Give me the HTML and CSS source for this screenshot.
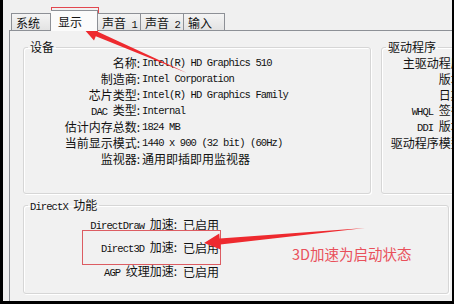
FILE: index.html
```html
<!DOCTYPE html>
<html lang="zh-CN">
<head>
  <meta charset="UTF-8">
  <title>DirectX 诊断工具 - 显示</title>
  <link rel="stylesheet" href="styles.css">
</head>
<body>
  <div class="screen">
    <div class="dialog">
      <div class="tabs">
        <div class="tab t1">系统</div>
        <div class="tab t2 active">显示</div>
        <div class="tab t3">声音<span class="en"> 1</span></div>
        <div class="tab t3">声音<span class="en"> 2</span></div>
        <div class="tab t4">输入</div>
      </div>
      <div class="panel">
        <div class="top-row">
          <fieldset class="group device">
            <legend>设备</legend>
            <div class="rows">
              <span class="lbl">名称:</span><span class="val en">Intel(R) HD Graphics 510</span>
              <span class="lbl">制造商:</span><span class="val en">Intel Corporation</span>
              <span class="lbl">芯片类型:</span><span class="val en">Intel(R) HD Graphics Family</span>
              <span class="lbl"><span class="en">DAC </span>类型:</span><span class="val en">Internal</span>
              <span class="lbl">估计内存总数:</span><span class="val en">1824 MB</span>
              <span class="lbl">当前显示模式:</span><span class="val en">1440 x 900 (32 bit) (60Hz)</span>
              <span class="lbl">监视器:</span><span class="val">通用即插即用监视器</span>
            </div>
          </fieldset>
          <fieldset class="group driver">
            <legend>驱动程序</legend>
            <div class="drows">
              <span>主驱动程序:</span>
              <span>版本:</span>
              <span>日期:</span>
              <span><span class="en">WHQL </span>签名:</span>
              <span><span class="en">DDI </span>版本:</span>
              <span>驱动程序模型:</span>
            </div>
          </fieldset>
        </div>
        <fieldset class="group directx">
          <legend><span class="en">DirectX </span>功能</legend>
          <div class="xrows">
            <span class="lbl"><span class="en">DirectDraw </span>加速:</span><span class="val">已启用</span>
            <span class="lbl"><span class="en">Direct3D </span>加速:</span><span class="val">已启用</span>
            <span class="lbl"><span class="en">AGP </span>纹理加速:</span><span class="val">已启用</span>
          </div>
        </fieldset>
        <fieldset class="group notes">
          <legend>备注</legend>
        </fieldset>
      </div>
    </div>

    <!-- red annotations drawn over the screenshot -->
    <svg class="marks" width="454" height="304" viewBox="0 0 454 304">
      <rect x="51.5" y="7.5" width="47" height="23" fill="none" stroke="#e2474f" stroke-width="1"/>
      <polygon points="187,73 97.8,31.7 99.6,27.6 83,28 94,40.4 95.8,36.3" fill="#ee2a2f"/>
      <rect x="82.5" y="230.5" width="138" height="34" fill="none" stroke="#dc5c62" stroke-width="1"/>
      <polygon points="365,228 219.7,238.5 219.3,233.5 204,243 220.7,249.5 220.3,244.5" fill="#ee2a2f"/>
    </svg>
    <div class="note">3D加速为启动状态</div>
  </div>
</body>
</html>
```

FILE: styles.css
```css
* {
  box-sizing: border-box;
}
body {
  margin: 0;
  font-family: "Noto Sans CJK SC", sans-serif;
  font-size: 12px;
  color: #111;
}
.screen {
  position: relative;
  width: 454px;
  height: 304px;
  overflow: hidden;
  background: #000;
}
.dialog {
  width: 449px;
  height: 301px;
  margin-left: 3px;
  padding-top: 13px;
  background: #f0f0f0;
  overflow: hidden;
}
.en {
  font-family: "Liberation Mono", monospace;
  font-size: 10.5px;
  letter-spacing: -0.9px;
}

/* tabs */
.tabs {
  display: flex;
  height: 17px;
  margin-left: 8px;
  position: relative;
  z-index: 1;
}
.tab {
  height: 17px;
  padding: 1px 0 0 4px;
  line-height: 15px;
  border: 1px solid #8d9096;
  border-bottom: none;
  border-left: none;
  background: linear-gradient(#f4f4f4, #e3e3e3);
  white-space: nowrap;
}
.t1 {
  width: 40px;
  border-left: 1px solid #8d9096;
}
.t2 {
  width: 47px;
}
.t3 {
  width: 43px;
}
.t4 {
  width: 41px;
}
.tab.active {
  margin-top: -3px;
  height: 21px;
  padding: 3px 0 0 7px;
  background: #fbfbfb;
}

/* tab page */
.panel {
  width: 470px;
  height: 280px;
  margin-left: 6px;
  padding: 9px 0 0 13px;
  border: 1px solid #8d9096;
  border-right: none;
  background: #f1f1f1;
}
.top-row {
  display: flex;
  gap: 10px;
}
.group {
  margin: 0;
  padding: 0;
  border: 1px solid #d6d6d6;
  border-radius: 3px;
  box-shadow: inset 1px 1px #fff, 1px 1px #fff;
  min-width: 0;
}
.group legend {
  margin-left: 4px;
  padding: 0 2px;
  line-height: 14px;
  height: 14px;
  white-space: nowrap;
}
.device {
  width: 348px;
  flex-shrink: 0;
}
.rows {
  display: grid;
  grid-template-columns: 116px 1fr;
  grid-auto-rows: 16px;
  align-items: center;
  column-gap: 2px;
  line-height: 16px;
  margin-top: 1px;
  padding-bottom: 26px;
}
.lbl {
  text-align: right;
  white-space: nowrap;
}
.val {
  white-space: nowrap;
}
.driver {
  width: 110px;
  flex-shrink: 0;
}
.drows {
  display: grid;
  grid-auto-rows: 16px;
  align-items: center;
  justify-items: end;
  width: 84px;
  line-height: 16px;
  margin-top: 1px;
}
.drows span {
  white-space: nowrap;
}
.directx {
  width: 426px;
  margin-top: 4px;
}
.xrows {
  display: grid;
  grid-template-columns: 153px 1fr;
  column-gap: 6px;
  grid-auto-rows: 23.5px;
  align-items: center;
  line-height: 16px;
  padding: 1px 0 9px;
}
.notes {
  width: 426px;
  height: 40px;
  margin-top: 6px;
}

/* annotation layer */
.marks {
  position: absolute;
  left: 0;
  top: 0;
  pointer-events: none;
}
.note {
  position: absolute;
  left: 292px;
  top: 246px;
  font-size: 14.5px;
  line-height: 16px;
  color: #e9505b;
  white-space: nowrap;
}
```
